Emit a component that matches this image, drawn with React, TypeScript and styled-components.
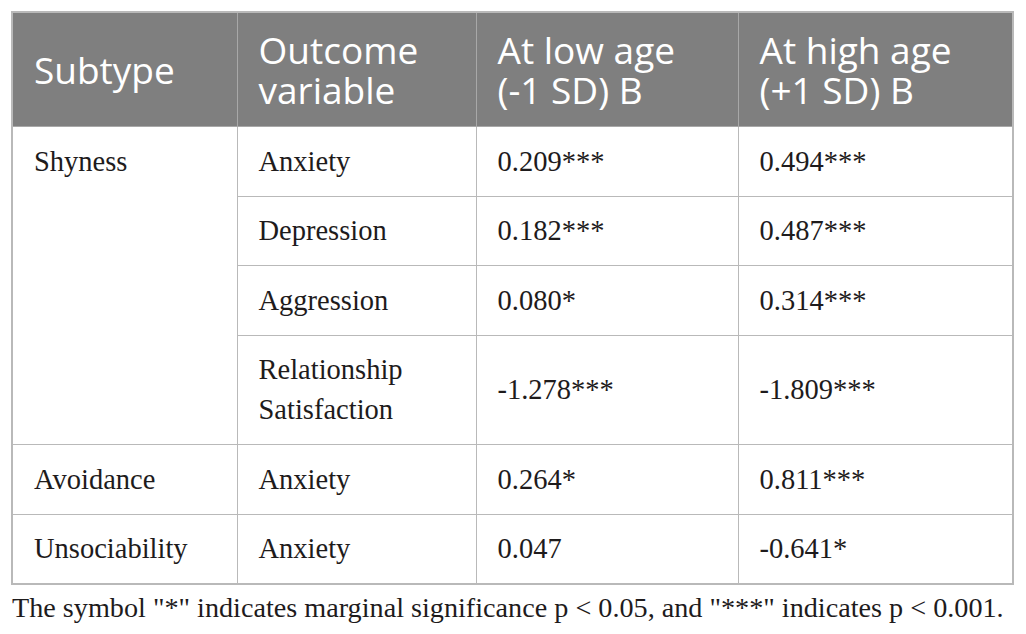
import React from 'react';
import styled, { createGlobalStyle } from 'styled-components';

const GlobalStyle = createGlobalStyle`
  html, body {
    margin: 0;
    padding: 0;
    background: #ffffff;
  }
`;

interface Row {
  subtype?: string;
  span?: number;
  outcome: string[];
  low: string;
  high: string;
}

const rows: Row[] = [
  { subtype: 'Shyness', span: 4, outcome: ['Anxiety'], low: '0.209***', high: '0.494***' },
  { outcome: ['Depression'], low: '0.182***', high: '0.487***' },
  { outcome: ['Aggression'], low: '0.080*', high: '0.314***' },
  { outcome: ['Relationship', 'Satisfaction'], low: '-1.278***', high: '-1.809***' },
  { subtype: 'Avoidance', span: 1, outcome: ['Anxiety'], low: '0.264*', high: '0.811***' },
  { subtype: 'Unsociability', span: 1, outcome: ['Anxiety'], low: '0.047', high: '-0.641*' },
];

const Page = styled.div`
  padding: 11px 14px 0 11px;
`;

const Table = styled.table`
  width: 1001px;
  border-collapse: collapse;
  border: 2px solid #b9b9b9;
  table-layout: fixed;
`;

const HeadCell = styled.th`
  background: #7f7f7f;
  color: #ffffff;
  font-family: 'Open Sans', 'Lato', sans-serif;
  font-weight: 400;
  font-size: 37px;
  line-height: 40px;
  text-align: left;
  vertical-align: middle;
  padding: 16px 18px 15px 21px;
  height: 82px;
  border: 1.5px solid #a8a8a8;
`;

const Cell = styled.td<{ $top?: boolean }>`
  font-family: 'Liberation Serif', 'Times New Roman', serif;
  font-size: 28.5px;
  line-height: 40px;
  color: #1e1b1c;
  vertical-align: ${({ $top }) => ($top ? 'top' : 'middle')};
  padding: 14.5px 18px 14px 21px;
  border: 1.5px solid #b9b9b9;
  height: 40px;
`;

const Note = styled.p`
  margin: 5px 0 0 1px;
  font-family: 'Liberation Serif', 'Times New Roman', serif;
  font-size: 28.2px;
  line-height: 36px;
  color: #1e1b1c;
  white-space: nowrap;
`;

export default function App() {
  return (
    <Page>
      <GlobalStyle />
      <Table>
        <colgroup>
          <col style={{ width: 225 }} />
          <col style={{ width: 239 }} />
          <col style={{ width: 262 }} />
          <col style={{ width: 275 }} />
        </colgroup>
        <thead>
          <tr>
            <HeadCell>Subtype</HeadCell>
            <HeadCell>
              Outcome
              <br />
              variable
            </HeadCell>
            <HeadCell>
              At low age
              <br />
              (-1 SD) B
            </HeadCell>
            <HeadCell>
              At high age
              <br />
              (+1 SD) B
            </HeadCell>
          </tr>
        </thead>
        <tbody>
          {rows.map((r, i) => (
            <tr key={i}>
              {r.subtype && (
                <Cell $top={(r.span ?? 1) > 1} rowSpan={r.span}>
                  {r.subtype}
                </Cell>
              )}
              <Cell>
                {r.outcome.map((line, j) => (
                  <React.Fragment key={j}>
                    {j > 0 && <br />}
                    {line}
                  </React.Fragment>
                ))}
              </Cell>
              <Cell>{r.low}</Cell>
              <Cell>{r.high}</Cell>
            </tr>
          ))}
        </tbody>
      </Table>
      <Note>
        The symbol "*" indicates marginal significance p &lt; 0.05, and "***" indicates p &lt; 0.001.
      </Note>
    </Page>
  );
}
